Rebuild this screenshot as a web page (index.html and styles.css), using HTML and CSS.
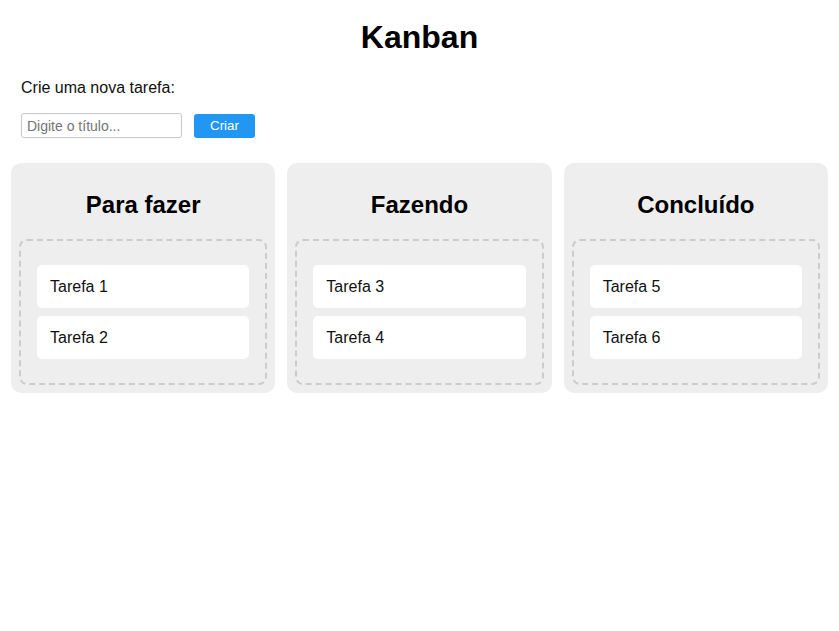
FILE: index.html
```html
<!DOCTYPE html>
<html lang="pt-BR">
<head>
<meta charset="utf-8">
<title>Kanban</title>
<link rel="stylesheet" href="styles.css">
</head>
<body>
<div class="app">
  <h1 class="title">Kanban</h1>
  <div class="create">
    <p class="create-label">Crie uma nova tarefa:</p>
    <div class="create-row">
      <input class="create-input" type="text" placeholder="Digite o título...">
      <button class="create-btn" type="button">Criar</button>
    </div>
  </div>
  <div class="board">
    <section class="column">
      <h2 class="column-title">Para fazer</h2>
      <div class="dropzone">
        <div class="card">Tarefa 1</div>
        <div class="card">Tarefa 2</div>
      </div>
    </section>
    <section class="column">
      <h2 class="column-title">Fazendo</h2>
      <div class="dropzone">
        <div class="card">Tarefa 3</div>
        <div class="card">Tarefa 4</div>
      </div>
    </section>
    <section class="column">
      <h2 class="column-title">Concluído</h2>
      <div class="dropzone">
        <div class="card">Tarefa 5</div>
        <div class="card">Tarefa 6</div>
      </div>
    </section>
  </div>
</div>
</body>
</html>
```
FILE: styles.css
```css
* { box-sizing: border-box; }

body {
  margin: 0;
  background: #fff;
  color: #000;
  font-family: "Liberation Sans", Arial, sans-serif;
}

.app {
  padding: 19px 11px;
}

.title {
  margin: 0 0 23px;
  font-size: 32px;
  font-weight: bold;
  text-align: center;
}

.create {
  padding-left: 10px;
}

.create-label {
  margin: 0 0 16px;
  font-size: 16px;
  color: #111;
}

.create-row {
  display: flex;
  align-items: center;
  gap: 12px;
  margin-bottom: 25px;
}

.create-input {
  width: 161px;
  height: 25px;
  padding: 2px 5px;
  border: 1px solid #c8c8c8;
  border-radius: 3px;
  font-family: "Liberation Sans", Arial, sans-serif;
  font-size: 14px;
  color: #222;
  outline: none;
}

.create-input::placeholder {
  color: #757575;
}

.create-btn {
  width: 61px;
  height: 24px;
  padding: 0;
  border: none;
  border-radius: 3px;
  background: #2196f3;
  color: #fff;
  font-family: "Liberation Sans", Arial, sans-serif;
  font-size: 13.33px;
  cursor: pointer;
}

.board {
  display: flex;
  gap: 12px;
}

.column {
  flex: 1;
  background: #eeeeee;
  border-radius: 10px;
  padding: 8px;
}

.column-title {
  margin: 20px 0;
  font-size: 24px;
  font-weight: bold;
  text-align: center;
}

.dropzone {
  border: 2px dashed #cccccc;
  border-radius: 8px;
  padding: 16px;
}

.card {
  margin: 8px 0;
  padding: 12px 13px;
  background: #fff;
  border-radius: 5px;
  font-size: 16px;
  line-height: 19px;
  color: #111;
}
```
